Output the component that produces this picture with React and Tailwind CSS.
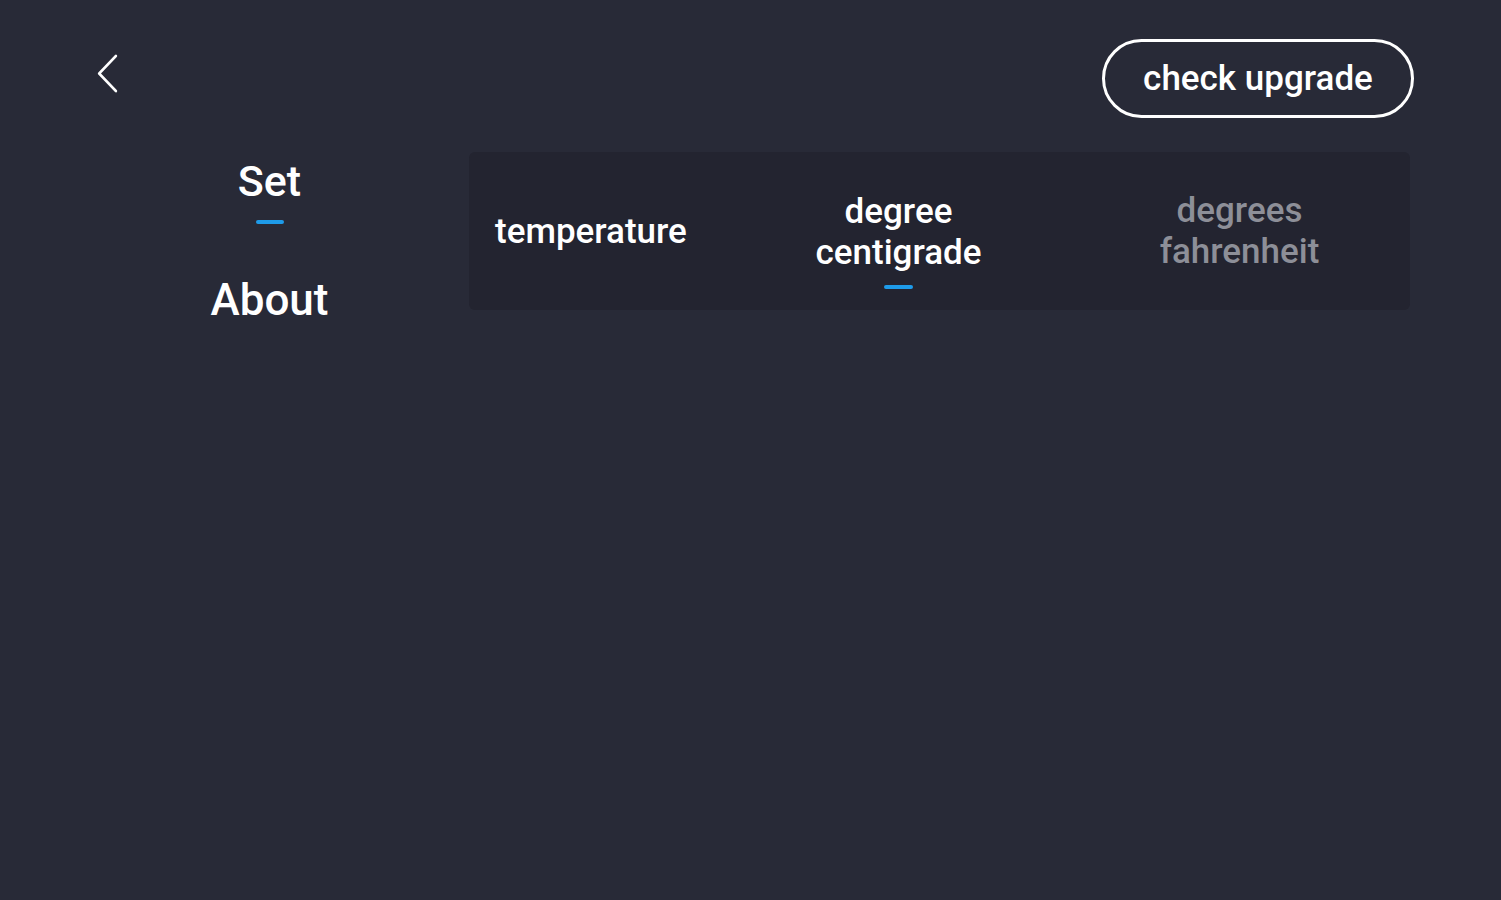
import React from "react";

export default function App() {
  return (
    <div className="w-[1501px] h-[900px] bg-[#282a37] text-white overflow-hidden" style={{ fontFamily: "Roboto, 'Noto Sans', sans-serif" }}>
      <div className="flex items-start justify-between pt-[39px] pl-[92px] pr-[87px]">
        <button className="mt-[14px] w-[32px] h-[42px] flex items-center justify-center">
          <svg width="32" height="42" viewBox="0 0 32 42" fill="none">
            <path d="M26 3 L7 20.5 L26 38" stroke="#ffffff" strokeWidth="3" strokeLinecap="round" strokeLinejoin="round" transform="translate(1,0) scale(0.88,1)" />
          </svg>
        </button>
        <button className="w-[312px] h-[79px] rounded-full border-[3px] border-white text-[35px] font-medium leading-none flex items-center justify-center text-white">
          check upgrade
        </button>
      </div>
      <div className="flex mt-[34px]">
        <div className="w-[469px] pl-[70px] flex flex-col items-center">
          <div className="text-[43px] font-medium leading-none mt-[8px]">Set</div>
          <div className="w-[28px] h-[4px] bg-[#1e9be9] rounded-sm mt-[17px]"></div>
          <div className="text-[44px] font-medium leading-none mt-[54px]">About</div>
        </div>
        <div className="w-[941px] h-[158px] bg-[#232430] rounded-md flex items-center">
          <div className="w-[259px] pl-[26px] text-[35px] font-medium leading-none">temperature</div>
          <div className="w-[341px] flex flex-col items-center text-[35px] font-medium leading-[41px] text-center pt-[18px]">
            <div>degree</div>
            <div>centigrade</div>
            <div className="w-[29px] h-[4px] bg-[#1e9be9] rounded-sm mt-[12px]"></div>
          </div>
          <div className="w-[341px] flex flex-col items-center text-[35px] font-medium leading-[41px] text-center text-[#8d8f98]">
            <div>degrees</div>
            <div>fahrenheit</div>
          </div>
        </div>
      </div>
    </div>
  );
}
